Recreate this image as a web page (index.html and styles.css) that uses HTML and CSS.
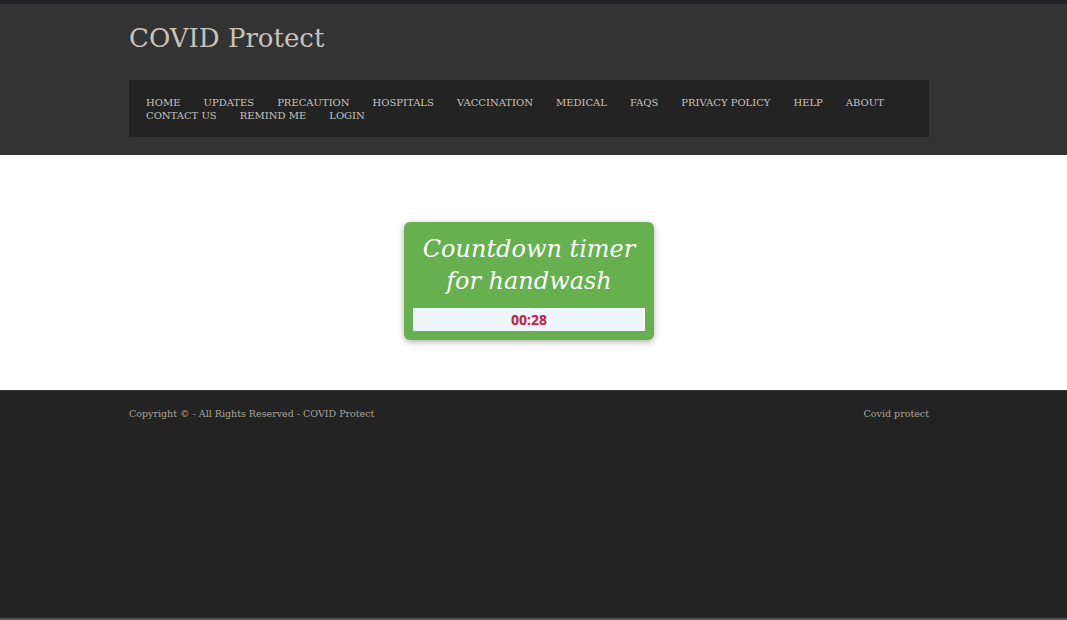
FILE: index.html
```html
<!DOCTYPE html>
<html>
<head>
<meta charset="utf-8">
<link rel="stylesheet" href="styles.css">
</head>
<body>
<header class="header">
  <div class="wrap">
    <h1 class="logo">COVID Protect</h1>
    <nav class="nav">
      <a href="#">HOME</a>
      <a href="#">UPDATES</a>
      <a href="#">PRECAUTION</a>
      <a href="#">HOSPITALS</a>
      <a href="#">VACCINATION</a>
      <a href="#">MEDICAL</a>
      <a href="#">FAQS</a>
      <a href="#">PRIVACY POLICY</a>
      <a href="#">HELP</a>
      <a href="#">ABOUT</a>
      <a href="#">CONTACT US</a>
      <a href="#">REMIND ME</a>
      <a href="#">LOGIN</a>
    </nav>
  </div>
</header>
<main class="main">
  <div class="card">
    <h2 class="card-title">Countdown timer for handwash</h2>
    <div class="timer">00:28</div>
  </div>
</main>
<footer class="footer">
  <div class="wrap footer-row">
    <span>Copyright © - All Rights Reserved - COVID Protect</span>
    <span>Covid protect</span>
  </div>
</footer>
</body>
</html>
```
FILE: styles.css
```css
html, body {
  margin: 0;
  padding: 0;
  height: 100%;
}
body {
  font-family: "DejaVu Serif", Georgia, serif;
  background: #232323;
  display: flex;
  flex-direction: column;
}
.wrap {
  width: 800px;
  margin-left: calc((100% - 809px) / 2);
}
.header {
  background: #333;
  border-top: 4px solid #1f1f24;
  height: 151px;
  box-sizing: content-box;
}
.logo {
  margin: 0;
  padding-top: 19px;
  height: 57px;
  font-weight: normal;
  font-size: 26px;
  line-height: 30px;
  color: #c8c3bd;
}
.nav {
  background: #232323;
  height: 57px;
  box-sizing: border-box;
  padding: 16px 40px 0 17px;
  display: flex;
  flex-wrap: wrap;
  column-gap: 23px;
  align-content: flex-start;
}
.nav a {
  font-size: 10px;
  line-height: 13px;
  color: #c8c3bd;
  text-decoration: none;
}
.main {
  background: #fff;
  height: 235px;
  padding-right: 9px;
  display: flex;
  justify-content: center;
  align-items: flex-start;
}
.card {
  margin-top: 67px;
  width: 250px;
  box-sizing: border-box;
  background: #66b04f;
  border-radius: 6px;
  padding: 11px 9px 9px;
  box-shadow: 0 2px 6px rgba(0,0,0,0.3);
  text-align: center;
}
.card-title {
  margin: 0 0 11px;
  font-weight: normal;
  font-style: italic;
  font-size: 24px;
  line-height: 32px;
  color: #fff;
}
.timer {
  background: #eef6fb;
  color: #c41a43;
  font-family: "Open Sans", sans-serif;
  font-weight: bold;
  font-size: 14px;
  line-height: 23px;
}
.footer {
  flex: 1;
  background: #232323;
  border-top: 1px solid #3a3a3a;
  border-bottom: 2px solid #555;
}
.footer-row {
  display: flex;
  justify-content: space-between;
  padding-top: 17px;
  font-size: 9.5px;
  color: #a8a39d;
}
```
